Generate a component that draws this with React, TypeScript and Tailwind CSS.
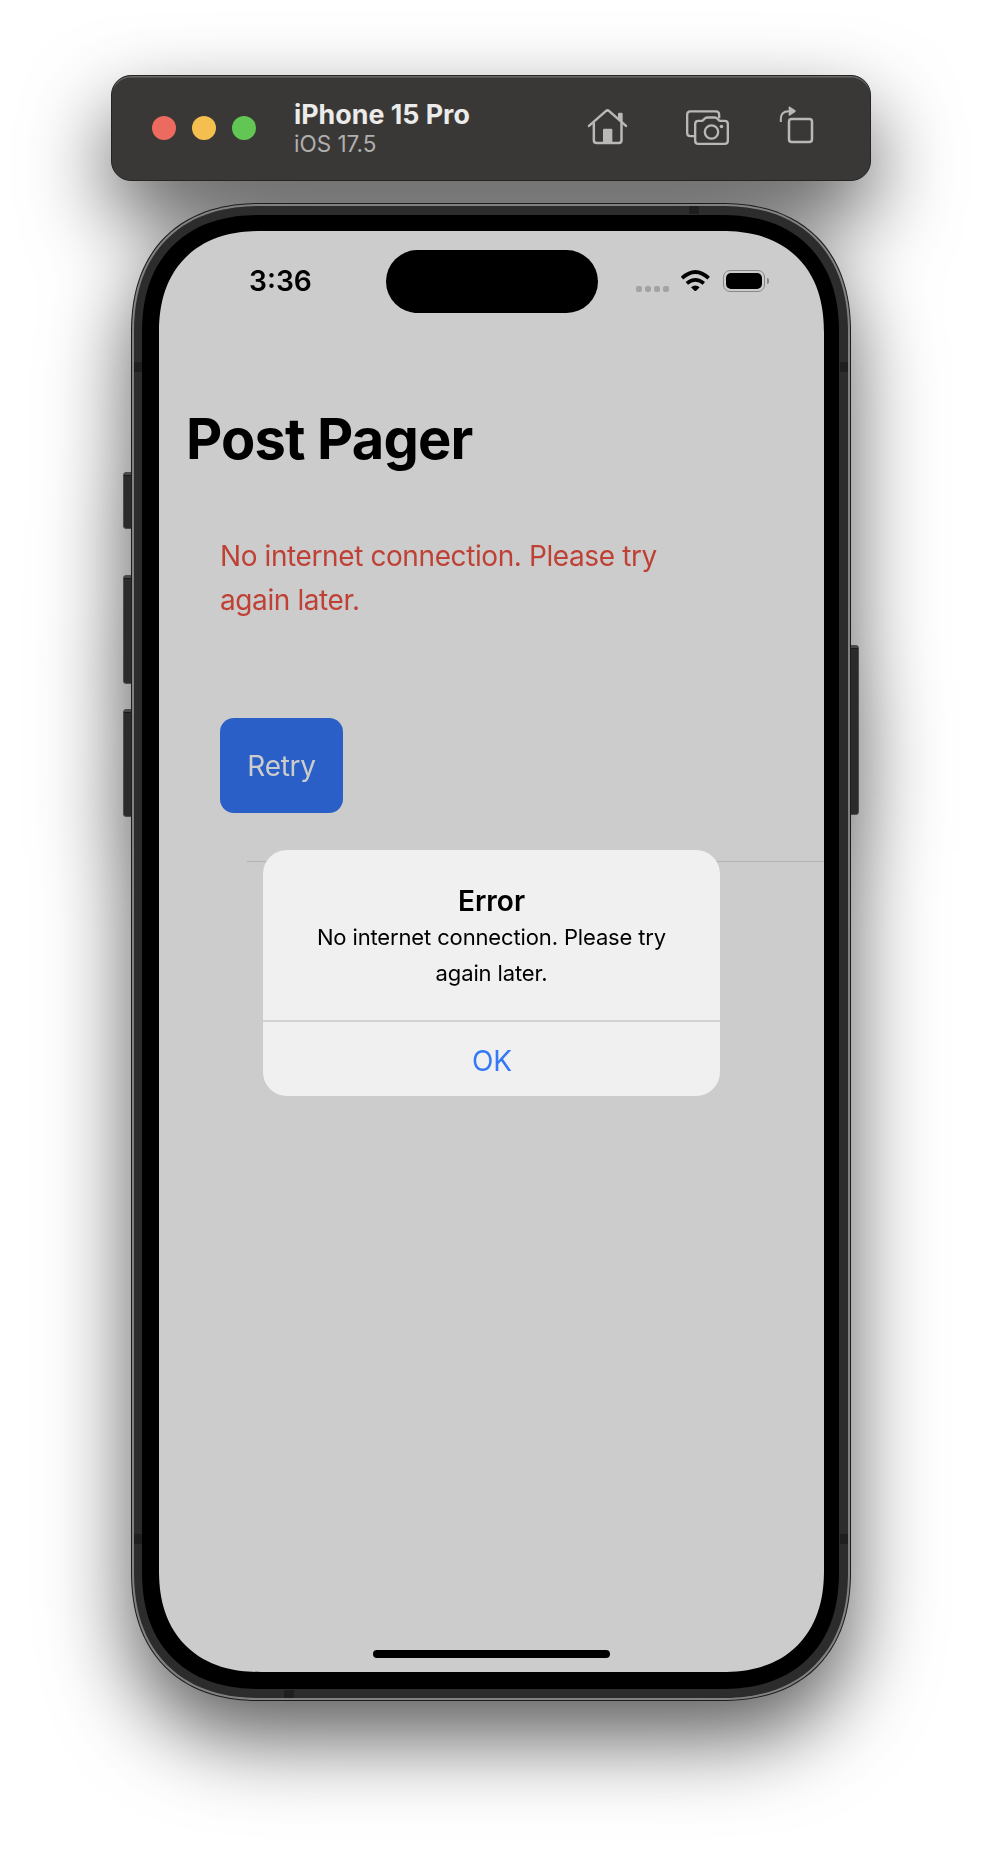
import type { ReactNode } from "react";

function HomeIcon() {
  return (
    <svg className="h-[39px] w-[42px]" viewBox="81 123 126 117" fill="none" stroke="#b9b8b6" strokeWidth="7.5" strokeLinecap="round" strokeLinejoin="round">
      <path d="M87 179.500L137.500 135.500Q142.500 131 147.500 135.500L198 179.500" />
      <path d="M101.500 172V223Q101.500 231 109.500 231H176.500Q184.500 231 184.500 223V172" />
      <path d="M129 191Q129 188 132 188H154Q157 188 157 191V230H129Z" fill="#b9b8b6" stroke="none" />
      <path d="M174 144Q174 140 178 140H184Q188 140 188 144V171L174 159Z" fill="#b9b8b6" stroke="none" />
    </svg>
  );
}

function CameraIcon() {
  return (
    <svg className="h-[38px] w-[45px]" viewBox="375 126 135 114" fill="none" stroke="#b9b8b6" strokeWidth="7" strokeLinecap="butt" strokeLinejoin="round">
      <path d="M402 210.500H391Q381.500 210.500 381.500 201V146Q381.500 136 391 136H468Q477.500 136 477.500 146V157" />
      <path d="M415 164.500H424Q428 164.500 431 161L434 158Q437 154.500 441 154.500H465Q469 154.500 472 158L475 161Q478 164.500 482 164.500H494Q503.500 164.500 503.500 174V224Q503.500 233.500 494 233.500H415Q405.500 233.500 405.500 224V174Q405.500 164.500 415 164.500Z" />
      <circle cx="454.500" cy="198" r="20" />
      <circle cx="484.500" cy="181.500" r="5.500" fill="#b9b8b6" stroke="none" />
    </svg>
  );
}

function RotateIcon() {
  return (
    <svg className="h-[38px] w-[37px]" viewBox="654 120 111 114" fill="none" stroke="#b9b8b6" strokeWidth="6">
      <rect x="687" y="159" width="69" height="69" rx="8" strokeWidth="7.5" />
      <path d="M662.500 168V158Q662.500 136 686 135.500H689" strokeWidth="6" />
      <path d="M686 124Q686 120 690 122.500L706 133Q708.500 135.500 706 138L690 148.500Q686 151 686 147Z" fill="#b9b8b6" stroke="none" />
    </svg>
  );
}

function WifiIcon() {
  return (
    <svg className="h-[21px] w-[29px]" viewBox="304 238 87 63" fill="none" stroke="#000" strokeWidth="11">
      <path d="M307 262.500Q347 225.500 387 262.500" />
      <path d="M321.500 278Q347 257 372.500 278" />
      <path d="M334 290Q347 279 360 290L349.500 300Q347 302 344.500 300Z" fill="#000" stroke="none" />
    </svg>
  );
}

function Band({ className }: { className: string }) {
  return <div className={`absolute bg-[#1f1f1f] ${className}`} />;
}

function SideButton({ className }: { className: string }) {
  return (
    <div className={`absolute border border-[#4c4c4c] bg-[#2b2b2b] ${className}`}>
      <div className="h-[3px] border-b border-[#1a1a1a] bg-[#484848]" />
    </div>
  );
}

function TitleBar() {
  return (
    <header className="flex h-[106px] w-[760px] items-center rounded-[20px] border border-[#252423] bg-[#3a3836] pl-10 shadow-[inset_0_2px_0_-0.500px_#6a6967]">
      <div className="flex gap-4">
        <span className="size-6 rounded-full bg-[#ed6a5f]" />
        <span className="size-6 rounded-full bg-[#f5bf50]" />
        <span className="size-6 rounded-full bg-[#62c655]" />
      </div>
      <div className="ml-[38px] w-[293px] whitespace-nowrap">
        <div className="text-[26.800px] leading-[32px] font-bold text-[#ebebea]">iPhone 15 Pro</div>
        <div className="text-[22.500px] leading-[28px] text-[#b0afae]">iOS 17.5</div>
      </div>
      <div className="mb-[3px] flex items-center">
        <HomeIcon />
        <div className="ml-14"><CameraIcon /></div>
        <div className="mb-1 ml-12"><RotateIcon /></div>
      </div>
    </header>
  );
}

function StatusBar() {
  return (
    <div className="flex h-[63px] items-center">
      <div className="w-[226.500px] pl-[90px] text-[28.200px] leading-[34px] font-semibold">3:36</div>
      <div className="h-[63px] w-[212px] rounded-full bg-black" />
      <div className="mt-[16px] ml-[38.500px] flex gap-[3px]">
        <span className="size-[6px] rounded-[2px] bg-[#a3a3a3]" />
        <span className="size-[6px] rounded-[2px] bg-[#a3a3a3]" />
        <span className="size-[6px] rounded-[2px] bg-[#a3a3a3]" />
        <span className="size-[6px] rounded-[2px] bg-[#a3a3a3]" />
      </div>
      <div className="-mt-px ml-3"><WifiIcon /></div>
      <div className="-mt-px ml-[13px] h-[22px] w-[42px] rounded-[7px] border border-[#868686] p-[2px]">
        <div className="h-full rounded-[5px] bg-black" />
      </div>
      <div className="ml-[2px] h-[6px] w-[2px] rounded-r-full bg-[#868686]" />
    </div>
  );
}

function Alert() {
  return (
    <div className="absolute top-[619px] left-[104px] h-[246px] w-[457px] overflow-hidden rounded-[24px] bg-[#f0f0f0] text-center">
      <div className="h-[170px] pt-[34px]">
        <div className="text-[28px] leading-[34px] font-semibold">Error</div>
        <div className="mt-[2px] text-[22px] leading-[35.500px] tracking-[-0.14px]">
          No internet connection. Please try
          <br />
          again later.
        </div>
      </div>
      <div className="border-t-2 border-[#d2d2d2] pt-[21px] pl-px text-[28px] leading-[36px] text-[#3478f6]">OK</div>
    </div>
  );
}

function Screen() {
  return (
    <main className="relative h-[1441px] w-[665px] overflow-hidden rounded-[102px] bg-[#cccccc] pt-[18.500px] text-black [corner-shape:superellipse(1.2)]">
      <StatusBar />
      <h1 className="mt-[90.500px] ml-[27px] text-[56px] leading-[72px] font-bold tracking-[-0.85px] whitespace-nowrap">Post Pager</h1>
      <p className="mt-[59px] ml-[61px] text-[28px] leading-[44px] tracking-[-0.4px] whitespace-nowrap text-[#bf4135]">
        No internet connection. Please try
        <br />
        again later.
      </p>
      <button className="mt-[96px] ml-[61px] block h-[95px] w-[123px] rounded-[14px] bg-[#295fc6] text-[28px] tracking-[-0.3px] text-[#cccccc]">
        Retry
      </button>
      <div className="mt-[48px] ml-[88px] h-px bg-[#b3b3b4]" />
      <Alert />
      <div className="absolute bottom-[14px] left-[214px] h-[8px] w-[237px] rounded-full bg-black" />
    </main>
  );
}

function PhoneFrame({ children }: { children: ReactNode }) {
  return (
    <div className="relative mt-[22px] w-[720px]">
      <SideButton className="top-[269px] -left-[8.500px] h-[57px] w-3 rounded-l-[3px]" />
      <SideButton className="top-[372px] -left-[8.500px] h-[109px] w-3 rounded-l-[3px]" />
      <SideButton className="top-[506px] -left-[8.500px] h-[108px] w-3 rounded-l-[3px]" />
      <SideButton className="top-[442px] -right-2 h-[170px] w-3 rounded-r-[3px]" />
      <div className="relative rounded-[130px] border border-[#1c1c1c] bg-[#818181] p-[2px] [corner-shape:superellipse(1.2)]">
        <div className="rounded-[127px] bg-[#2c2c2c] pt-[9px] pr-[9px] pb-[9px] pl-[8px] [corner-shape:superellipse(1.2)]">
          <div className="rounded-[118px] bg-black pt-4 pr-[15px] pb-[17px] pl-[17px] [corner-shape:superellipse(1.2)]">{children}</div>
        </div>
        <Band className="top-[158px] left-[2px] h-[10px] w-2" />
        <Band className="top-[158px] right-[2px] h-[10px] w-2" />
        <Band className="bottom-[156px] left-[2px] h-[10px] w-2" />
        <Band className="right-[2px] bottom-[156px] h-[10px] w-2" />
        <Band className="top-[2px] left-[557px] h-2 w-[10px]" />
        <Band className="bottom-[2px] left-[152px] h-2 w-[10px]" />
      </div>
    </div>
  );
}

export default function App() {
  return (
    <div className="h-[1852px] w-[982px] overflow-hidden bg-white font-['Inter',sans-serif]">
      <div className="flex h-full flex-col items-center pt-[75px] drop-shadow-[0_37px_42px_rgba(0,0,0,0.64)]">
        <TitleBar />
        <PhoneFrame>
          <Screen />
        </PhoneFrame>
      </div>
    </div>
  );
}
